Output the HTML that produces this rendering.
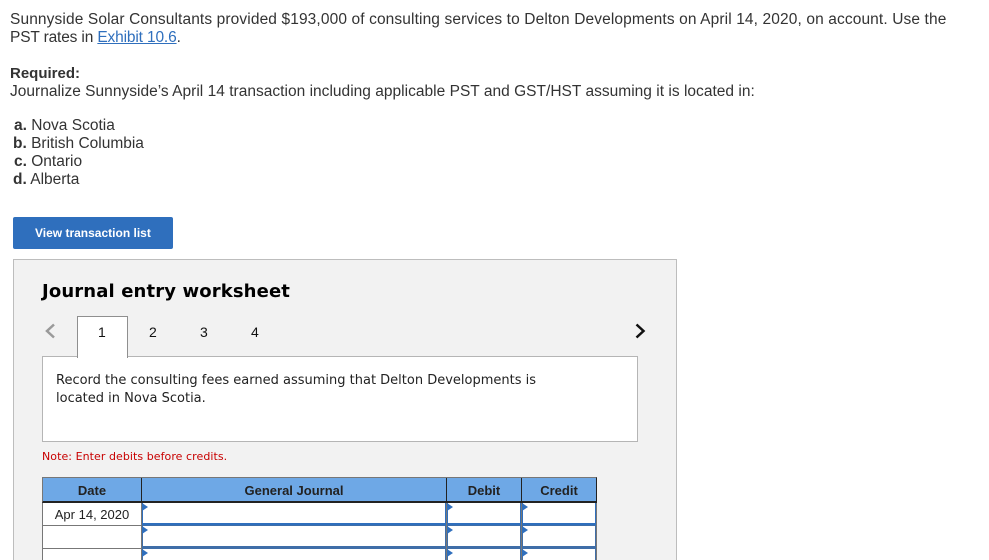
<!DOCTYPE html>
<html>
<head>
<meta charset="utf-8">
<style>
html,body{margin:0;padding:0;background:#fff;}
#p{position:relative;width:989px;height:560px;overflow:hidden;background:#fff;font-family:"Liberation Sans",sans-serif;color:#333;}
.t{position:absolute;white-space:nowrap;}
.m{font-size:15.5px;line-height:18px;color:#333;}
.d{font-family:"DejaVu Sans",sans-serif;}
.b{position:absolute;box-sizing:border-box;}
.h{position:absolute;top:484px;font-size:13px;line-height:14px;font-weight:bold;color:#222;text-align:center;}
.n{position:absolute;top:325px;font-size:14px;line-height:15px;color:#111;}
.tri{position:absolute;width:0;height:0;border-left:6px solid #2f6fbd;border-top:4px solid transparent;border-bottom:4px solid transparent;}
</style>
</head>
<body>
<div id="p">
<div class="t m" style="left:10px;top:11px;letter-spacing:.118px;">Sunnyside Solar Consultants provided $193,000 of consulting services to Delton Developments on April 14, 2020, on account. Use the</div>
<div class="t m" style="left:10px;top:29px;letter-spacing:-.15px;">PST rates in <span style="color:#2f6fbd;text-decoration:underline;">Exhibit 10.6</span>.</div>
<div class="t m" style="left:10px;top:65px;font-size:15px;font-weight:bold;">Required:</div>
<div class="t m" style="left:10px;top:83px;letter-spacing:.02px;">Journalize Sunnyside’s April 14 transaction including applicable PST and GST/HST assuming it is located in:</div>
<div class="t m" style="left:14px;top:117px;"><b>a.</b> Nova Scotia</div>
<div class="t m" style="left:13px;top:135px;"><b>b.</b> British Columbia</div>
<div class="t m" style="left:14px;top:153px;"><b>c.</b> Ontario</div>
<div class="t m" style="left:13px;top:171px;"><b>d.</b> Alberta</div>

<div class="b" style="left:13px;top:217px;width:160px;height:32px;background:#2f6fbd;border-radius:2px;"></div>
<div class="t" style="left:35px;top:226px;font-size:12px;line-height:15px;font-weight:bold;color:#fff;">View transaction list</div>

<div class="b" style="left:13px;top:259px;width:664px;height:320px;background:#f2f2f2;border:1px solid #bdbdbd;"></div>
<div class="t d" style="left:42px;top:281px;font-size:18px;line-height:22px;font-weight:bold;color:#000;letter-spacing:.13px;">Journal entry worksheet</div>

<svg class="b" style="left:44px;top:322px;" width="12" height="18" viewBox="0 0 12 18"><path d="M10 2.500 L3 9 L10 15.500" fill="none" stroke="#9a9a9a" stroke-width="2.500"/></svg>
<svg class="b" style="left:634px;top:322px;" width="12" height="18" viewBox="0 0 12 18"><path d="M2.500 2.500 L9.500 9 L2.500 15.500" fill="none" stroke="#111" stroke-width="2.500"/></svg>

<div class="b" style="left:42px;top:356px;width:596px;height:86px;background:#fff;border:1px solid #b5b5b5;"></div>
<div class="b" style="left:77px;top:316px;width:51px;height:42px;background:#fff;border:1px solid #8f8f8f;border-bottom:none;"></div>
<div class="n" style="left:98px;">1</div>
<div class="n" style="left:149px;">2</div>
<div class="n" style="left:200px;">3</div>
<div class="n" style="left:251px;">4</div>

<div class="t d" style="left:56px;top:372px;font-size:13px;line-height:18px;color:#222;">Record the consulting fees earned assuming that Delton Developments is</div>
<div class="t d" style="left:56px;top:390px;font-size:13px;line-height:18px;color:#222;">located in Nova Scotia.</div>
<div class="t d" style="left:42px;top:450px;font-size:11px;line-height:14px;color:#c80000;letter-spacing:.06px;">Note: Enter debits before credits.</div>

<!-- table header -->
<div class="b" style="left:42px;top:477px;width:555px;height:26px;background:#6ea8e6;border-top:1px solid #777;border-left:1px solid #777;border-right:1px solid #222;border-bottom:2px solid #222;"></div>
<div class="b" style="left:141px;top:478px;width:1px;height:24px;background:#222;"></div>
<div class="b" style="left:446px;top:478px;width:1px;height:24px;background:#222;"></div>
<div class="b" style="left:521px;top:478px;width:1px;height:24px;background:#222;"></div>
<div class="h" style="left:42px;width:100px;">Date</div>
<div class="h" style="left:142px;width:304px;">General Journal</div>
<div class="h" style="left:447px;width:74px;">Debit</div>
<div class="h" style="left:522px;width:74px;">Credit</div>

<!-- body grid -->
<div class="b" style="left:42px;top:503px;width:100px;height:60px;background:#fff;border-left:1px solid #777;border-right:1px solid #777;"></div>
<div class="b" style="left:43px;top:525px;width:98px;height:1px;background:#777;"></div>
<div class="b" style="left:43px;top:548px;width:98px;height:1px;background:#777;"></div>
<div class="t" style="left:43px;top:507px;width:98px;text-align:center;font-size:13px;line-height:15px;color:#222;">Apr 14, 2020</div>

<!-- row 1 inputs -->
<div class="b" style="left:142px;top:503px;width:304px;height:22px;background:#fff;border:1px solid #2f6fbd;border-width:0 1px 2px 1px;"></div>
<div class="b" style="left:447px;top:503px;width:74px;height:22px;background:#fff;border:1px solid #2f6fbd;border-width:0 1px 2px 1px;"></div>
<div class="b" style="left:522px;top:503px;width:74px;height:22px;background:#fff;border:1px solid #2f6fbd;border-width:0 1px 2px 1px;"></div>
<!-- row 2 inputs -->
<div class="b" style="left:142px;top:525px;width:304px;height:23px;background:#fff;border:1px solid #3f6ea8;border-width:1px 1px 2px 1px;"></div>
<div class="b" style="left:447px;top:525px;width:74px;height:23px;background:#fff;border:1px solid #3f6ea8;border-width:1px 1px 2px 1px;"></div>
<div class="b" style="left:522px;top:525px;width:74px;height:23px;background:#fff;border:1px solid #3f6ea8;border-width:1px 1px 2px 1px;"></div>
<!-- row 3 inputs -->
<div class="b" style="left:142px;top:548px;width:304px;height:20px;background:#fff;border:1px solid #3f6ea8;"></div>
<div class="b" style="left:447px;top:548px;width:74px;height:20px;background:#fff;border:1px solid #3f6ea8;"></div>
<div class="b" style="left:522px;top:548px;width:74px;height:20px;background:#fff;border:1px solid #3f6ea8;"></div>

<!-- vertical greys -->
<div class="b" style="left:141px;top:503px;width:1px;height:60px;background:#777;"></div>
<div class="b" style="left:446px;top:503px;width:1px;height:60px;background:#777;"></div>
<div class="b" style="left:521px;top:503px;width:1px;height:60px;background:#777;"></div>
<div class="b" style="left:596px;top:503px;width:1px;height:60px;background:#777;"></div>

<!-- triangles -->
<div class="tri" style="left:142px;top:503px;"></div>
<div class="tri" style="left:447px;top:503px;"></div>
<div class="tri" style="left:522px;top:503px;"></div>
<div class="tri" style="left:142px;top:526px;"></div>
<div class="tri" style="left:447px;top:526px;"></div>
<div class="tri" style="left:522px;top:526px;"></div>
<div class="tri" style="left:142px;top:549px;"></div>
<div class="tri" style="left:447px;top:549px;"></div>
<div class="tri" style="left:522px;top:549px;"></div>
</div>
</body>
</html>
